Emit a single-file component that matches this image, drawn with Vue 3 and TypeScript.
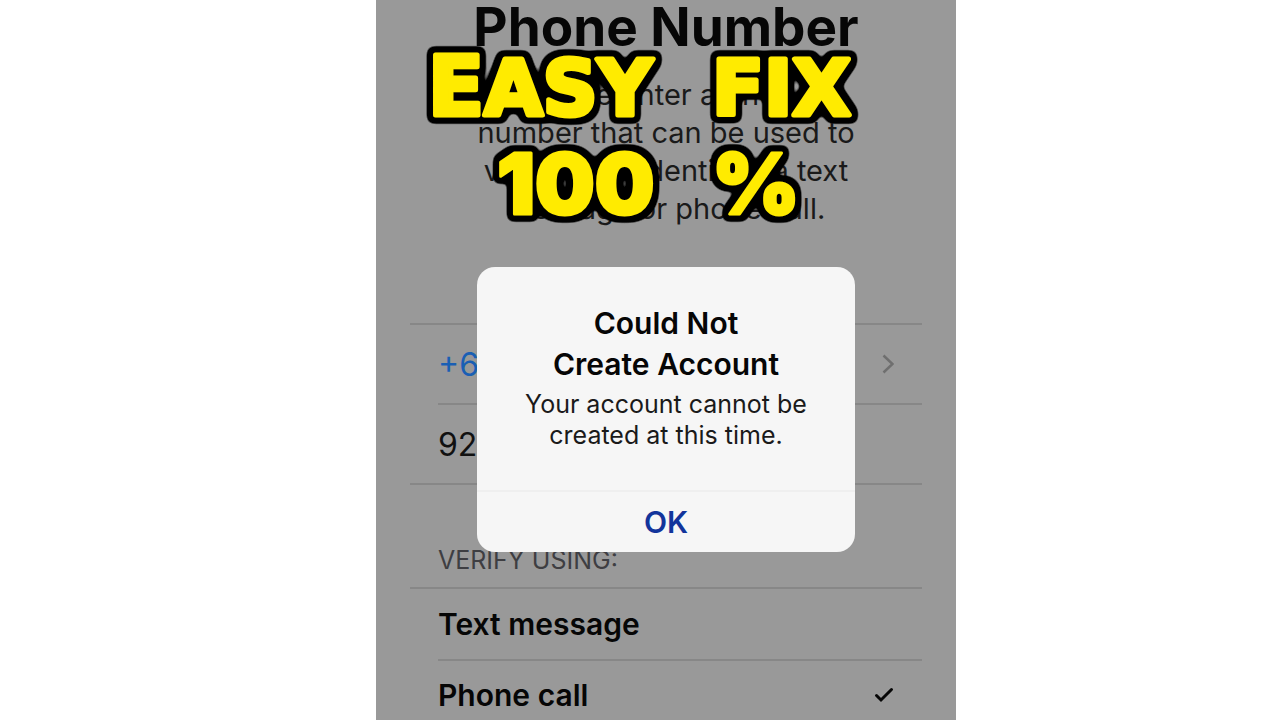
<script setup lang="ts">
import { ref } from 'vue'

type Method = 'text' | 'call'

const phone = ref('92')
const method = ref<Method>('call')
const methods: { id: Method; label: string }[] = [
  { id: 'text', label: 'Text message' },
  { id: 'call', label: 'Phone call' },
]
const intro = [
  'Please enter a phone',
  'number that can be used to',
  'verify your identity via text',
  'message or phone call.',
]
</script>

<template>
  <div class="page">
    <main class="phone">
      <h1>Phone Number</h1>
      <p class="intro">
        <span v-for="line in intro" :key="line">{{ line }}</span>
      </p>

      <form class="form" @submit.prevent>
        <div class="group">
          <button type="button" class="row country">
            <span>+6</span>
            <svg class="chevron" viewBox="0 0 12 20" aria-hidden="true">
              <path d="M1.5 1.5 L10.5 10 L1.5 18.5" />
            </svg>
          </button>
          <div class="row">
            <input v-model="phone" type="tel" aria-label="Phone number" />
          </div>
        </div>

        <h2 id="verify-title">VERIFY USING:</h2>
        <div class="group methods" role="radiogroup" aria-labelledby="verify-title">
          <label v-for="m in methods" :key="m.id" class="row method">
            <input v-model="method" type="radio" name="method" :value="m.id" />
            <span>{{ m.label }}</span>
            <svg v-if="method === m.id" class="check" viewBox="0 0 20 16" aria-hidden="true">
              <path d="M2.5 8.5 L7 13 L17.5 2.5" />
            </svg>
          </label>
        </div>
      </form>

      <section class="alert" role="alertdialog" aria-labelledby="alert-title" aria-describedby="alert-text">
        <div class="alert-body">
          <h3 id="alert-title">Could Not<br />Create Account</h3>
          <p id="alert-text">Your account cannot be<br />created at this time.</p>
        </div>
        <button type="button" class="ok">OK</button>
      </section>

      <svg class="lettering" viewBox="0 0 580 240">
        <defs>
          <filter id="outline" x="-10%" y="-20%" width="120%" height="140%" color-interpolation-filters="sRGB">
            <feMorphology in="SourceAlpha" operator="dilate" radius="4" result="wide" />
            <feGaussianBlur in="wide" stdDeviation="3" result="soft" />
            <feComponentTransfer in="soft" result="edge">
              <feFuncA type="linear" slope="7" intercept="-1.2" />
            </feComponentTransfer>
            <feMerge>
              <feMergeNode in="edge" />
              <feMergeNode in="SourceGraphic" />
            </feMerge>
          </filter>
        </defs>
        <g filter="url(#outline)">
          <text class="word" x="52" y="115"><tspan class="initial">E</tspan>asy</text>
          <text class="word" x="336" y="115">fix</text>
          <text class="figure" x="121" y="214">100</text>
          <text class="figure" x="336" y="214">%</text>
        </g>
      </svg>
    </main>
  </div>
</template>

<style>
body {
  margin: 0;
  background: #fff;
}
</style>

<style scoped>
.page {
  display: grid;
  grid-template-columns: 376fr 580fr 324fr;
  height: 100vh;
  overflow: hidden;
  font-family: Inter, 'Liberation Sans', sans-serif;
  color: #060606;
}
.phone {
  grid-column: 2;
  position: relative;
  overflow: hidden;
  background: #999;
}
h1,
h2,
h3,
p {
  margin: 0;
}
h1 {
  font-size: 53px;
  line-height: 54px;
  font-weight: 700;
  text-align: center;
}
.intro {
  margin-top: 22px;
  font-size: 29px;
  line-height: 38px;
  text-align: center;
  color: #1a1a1a;
}
.intro span {
  display: block;
}
.form {
  margin-top: 95px;
  padding: 0 34px;
}
.group {
  border-top: 2px solid #878787;
  border-bottom: 2px solid #878787;
  padding-left: 28px;
}
.row {
  box-sizing: border-box;
  display: flex;
  align-items: center;
  justify-content: space-between;
  width: 100%;
  height: 80px;
  padding: 0 28px 0 0;
  font-family: inherit;
  font-size: 32px;
}
.row + .row {
  border-top: 2px solid #878787;
}
.row.country {
  height: 78px;
  border: 0;
  background: none;
  color: #1a5fb4;
}
.row input[type='tel'] {
  width: 100%;
  padding: 0;
  border: 0;
  outline: 0;
  background: none;
  font: inherit;
  color: #111;
}
.chevron {
  width: 12px;
  height: 20px;
}
.chevron path {
  fill: none;
  stroke: #6f6f6f;
  stroke-width: 2.5;
}
h2 {
  margin: 59px 0 11px 28px;
  font-size: 25px;
  line-height: 32px;
  font-weight: 400;
  color: #3e3e42;
}
.row.method {
  height: 70px;
  font-size: 30px;
  font-weight: 600;
}
.method input {
  position: absolute;
  opacity: 0;
}
.check {
  width: 20px;
  height: 16px;
}
.check path {
  fill: none;
  stroke: #060606;
  stroke-width: 3;
  stroke-linecap: round;
}
.alert {
  position: absolute;
  top: 267px;
  left: 101px;
  right: 101px;
  overflow: hidden;
  border-radius: 18px;
  background: #f6f6f6;
  text-align: center;
}
.alert-body {
  padding: 36px 16px 39px;
}
h3 {
  font-size: 30px;
  line-height: 41px;
  font-weight: 600;
}
.alert p {
  margin-top: 4px;
  font-size: 25px;
  line-height: 31px;
  color: #1a1a1a;
}
.ok {
  display: block;
  width: 100%;
  height: 62px;
  padding: 0;
  border: 0;
  border-top: 2px solid #efefef;
  background: none;
  font-family: inherit;
  font-size: 30px;
  font-weight: 600;
  color: #12349b;
}
.lettering {
  position: absolute;
  top: 0;
  left: 0;
  width: 100%;
  pointer-events: none;
}
.lettering text {
  fill: #ffeb00;
  stroke: #ffeb00;
  stroke-linejoin: round;
}
.word {
  font-family: 'DejaVu Sans', sans-serif;
  font-size: 76px;
  font-weight: 700;
  text-transform: uppercase;
  stroke-width: 5;
}
.initial {
  font-size: 82px;
}
.figure {
  font-size: 84px;
  font-weight: 900;
  stroke-width: 3;
}
</style>
